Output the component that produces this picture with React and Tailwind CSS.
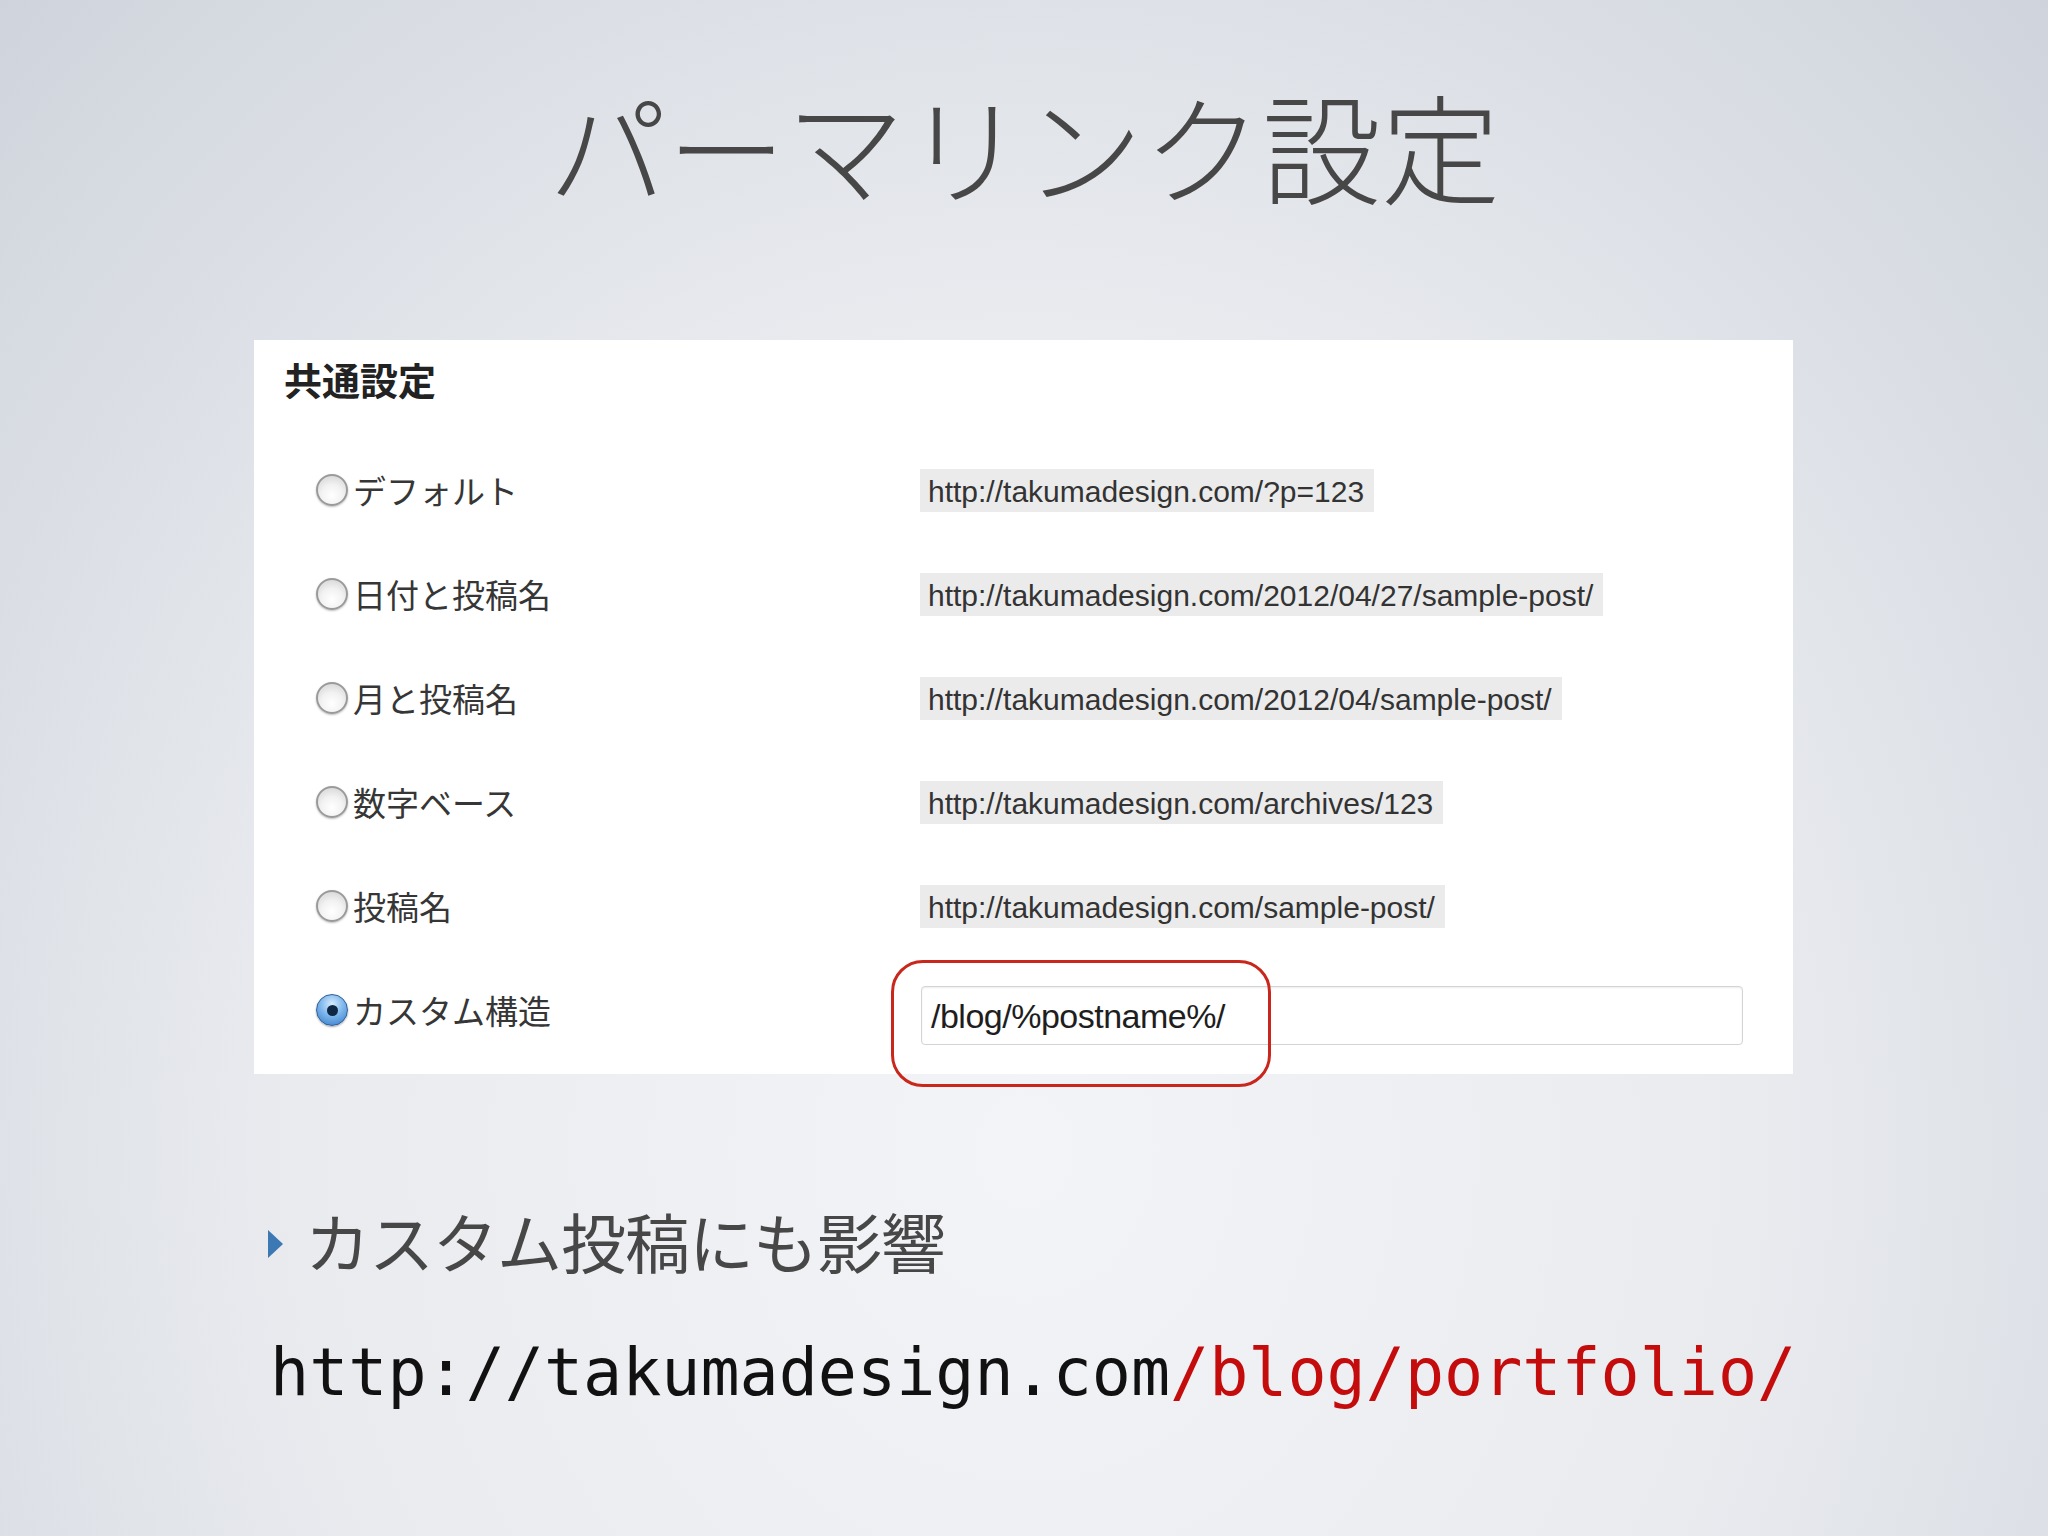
import React from 'react'

const jp = { fontFamily: '"Noto Sans CJK JP", "Noto Sans", sans-serif' }
const sans = { fontFamily: '"Liberation Sans", Arial, sans-serif' }
const mono = { fontFamily: '"DejaVu Sans Mono", "Liberation Mono", monospace' }

const options = [
  { label: 'デフォルト', url: 'http://takumadesign.com/?p=123' },
  { label: '日付と投稿名', url: 'http://takumadesign.com/2012/04/27/sample-post/' },
  { label: '月と投稿名', url: 'http://takumadesign.com/2012/04/sample-post/' },
  { label: '数字ベース', url: 'http://takumadesign.com/archives/123' },
  { label: '投稿名', url: 'http://takumadesign.com/sample-post/' },
]

function Radio({ checked }) {
  if (checked) {
    return (
      <span className="flex h-[32px] w-[32px] shrink-0 items-center justify-center rounded-full border border-[#2d5f9a] bg-[radial-gradient(circle_at_50%_30%,#d6ecff_0%,#7fb7ec_45%,#2f78c8_100%)] shadow-[0_1px_2px_rgba(0,0,0,0.35)]">
        <span className="h-[11px] w-[11px] rounded-full bg-[#0d2744]" />
      </span>
    )
  }
  return (
    <span className="h-[32px] w-[32px] shrink-0 rounded-full border-2 border-[#9a9a9a] bg-[radial-gradient(circle_at_50%_70%,#ffffff_0%,#f2f2f2_45%,#cfcfcf_100%)] shadow-[0_1px_2px_rgba(0,0,0,0.25)]" />
  )
}

function Row({ label, checked, children }) {
  return (
    <div className="flex h-[104px] items-center">
      <div className="flex w-[604px] items-center gap-[5px]">
        <Radio checked={checked} />
        <span className="text-[33px] leading-none text-[#363636]" style={jp}>
          {label}
        </span>
      </div>
      <div className="flex-1">{children}</div>
    </div>
  )
}

export default function App() {
  return (
    <div className="flex h-[1536px] w-[2048px] flex-col overflow-hidden bg-[radial-gradient(ellipse_at_50%_75%,#f3f4f7_0%,#e9ebef_50%,#cfd4dc_100%)]">
      <h1
        className="mt-[85px] text-center text-[119px] font-light leading-none text-[#474747]"
        style={jp}
      >
        パーマリンク設定
      </h1>

      <div className="ml-[254px] mt-[136px] h-[734px] w-[1539px] bg-white pl-[30px] pt-[20px]">
        <div className="text-[38px] font-bold leading-none text-[#222]" style={jp}>
          共通設定
        </div>

        <div className="mt-[40px] pl-[32px]">
          {options.map(o => (
            <Row key={o.label} label={o.label}>
              <span
                className="inline-flex h-[43px] items-center bg-[#ebebeb] pl-2 pr-[10px] pt-[3px] text-[30px] leading-none text-[#333]"
                style={sans}
              >
                {o.url}
              </span>
            </Row>
          ))}
          <Row label="カスタム構造" checked>
            <div className="relative mt-[11px] ml-px flex h-[59px] w-[822px] items-center rounded-[4px] border border-[#d4d4d4] pl-[9px] shadow-[inset_0_1px_2px_rgba(0,0,0,0.08)]">
              <span className="text-[34px] leading-none tracking-[-0.5px] text-[#1e1e1e]" style={sans}>
                /blog/%postname%/
              </span>
              {/* red highlight annotation */}
              <div className="absolute left-[-31px] top-[-27px] h-[127px] w-[380px] rounded-[32px] border-[3px] border-[#c9261c]" />
            </div>
          </Row>
        </div>
      </div>

      <div className="ml-[268px] mt-[134px] flex items-center gap-[22px]">
        <svg width="15" height="28" viewBox="0 0 15 28" className="mt-[6px]">
          <polygon points="0,0 15,14 0,28" fill="#3b78b4" />
        </svg>
        <span className="text-[65px] leading-none tracking-[-1px] text-[#474747]" style={jp}>
          カスタム投稿にも影響
        </span>
      </div>

      <div className="ml-[270px] mt-[67px] text-[65px] leading-none text-[#111]" style={mono}>
        http://takumadesign.com<span className="text-[#c40c0c]">/blog/portfolio/</span>
      </div>
    </div>
  )
}
